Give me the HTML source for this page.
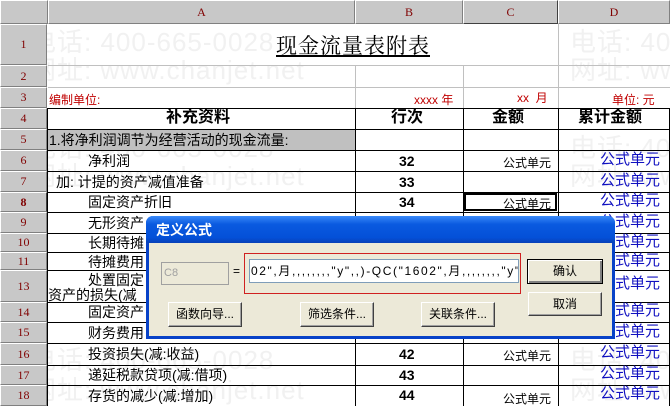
<!DOCTYPE html>
<html><head><meta charset="utf-8"><style>
*{margin:0;padding:0;box-sizing:border-box}
body{width:670px;height:406px;overflow:hidden;background:#fff;position:relative;font-family:"Liberation Sans","Noto Sans CJK SC","WenQuanYi Zen Hei",sans-serif;font-size:13px;color:#000}
.a{position:absolute;white-space:nowrap}
.rh{position:absolute;left:0;width:47px;background:#c8c8c8;border:1px solid #fff;border-right-color:#808080;border-bottom-color:#808080;color:#800000;font-size:12px;text-align:center;font-family:"Liberation Serif",serif}
.ch{position:absolute;top:0;height:24px;background:#c8c8c8;border:1px solid #fff;border-right-color:#808080;border-bottom-color:#808080;color:#800000;font-size:12px;text-align:center;line-height:22px;font-family:"Liberation Serif",serif}
.hl{position:absolute;left:47px;width:623px;height:1px;background:#000}
.gl{position:absolute;height:1px;background:#c0c0c0}
.vl{position:absolute;width:1px;background:#000}
.wm{position:absolute;color:#f1f1f1;font-size:26px;white-space:nowrap;letter-spacing:1px}
.t{position:absolute;font-size:14px;white-space:nowrap;line-height:20px}
.blue{color:#1010c0;font-size:15px}
.btn{position:absolute;background:#ece9d8;border:1px solid #fff;border-right-color:#404040;border-bottom-color:#404040;box-shadow:inset -1px -1px 0 #a0a0a0;font-size:12px;text-align:center;line-height:22px}
</style></head><body>
<div class="wm" style="left:30px;top:22px">电话: 400-665-0028</div>
<div class="wm" style="left:30px;top:50px">网址: www.chanjet.net</div>
<div class="wm" style="left:570px;top:22px">电话: 400</div>
<div class="wm" style="left:570px;top:50px">网址: www</div>
<div class="wm" style="left:30px;top:128px">电话: 400-665-0028</div>
<div class="wm" style="left:30px;top:156px">网址: www.chanjet.net</div>
<div class="wm" style="left:570px;top:128px">电话: 400</div>
<div class="wm" style="left:570px;top:156px">网址: www</div>
<div class="wm" style="left:30px;top:340px">电话: 400-665-0028</div>
<div class="wm" style="left:30px;top:370px">网址: www.chanjet.net</div>
<div class="wm" style="left:570px;top:340px">电话: 400</div>
<div class="wm" style="left:570px;top:370px">网址: www</div>

<div class="ch" style="left:0;width:48px"></div>
<div class="ch" style="left:48px;width:307px">A</div>
<div class="ch" style="left:355px;width:108px">B</div>
<div class="ch" style="left:463px;width:95px;border-color:#fff #404040 #404040 #fff">C</div>
<div class="ch" style="left:558px;width:112px">D</div>

<div class="rh" style="top:24px;height:41px;line-height:39px">1</div>
<div class="rh" style="top:65px;height:22px;line-height:20px">2</div>
<div class="rh" style="top:87px;height:21px;line-height:19px">3</div>
<div class="rh" style="top:108px;height:21px;line-height:19px">4</div>
<div class="rh" style="top:129px;height:21px;line-height:19px">5</div>
<div class="rh" style="top:150px;height:21px;line-height:19px">6</div>
<div class="rh" style="top:171px;height:21px;line-height:19px">7</div>
<div class="rh" style="top:192px;height:20px;line-height:18px;font-weight:bold;border-right-color:#404040">8</div>
<div class="rh" style="top:212px;height:21px;line-height:19px">9</div>
<div class="rh" style="top:233px;height:19px;line-height:17px">10</div>
<div class="rh" style="top:252px;height:18px;line-height:16px">11</div>
<div class="rh" style="top:270px;height:32px;line-height:30px">13</div>
<div class="rh" style="top:302px;height:20px;line-height:18px">14</div>
<div class="rh" style="top:322px;height:21px;line-height:19px">15</div>
<div class="rh" style="top:343px;height:22px;line-height:20px">16</div>
<div class="rh" style="top:365px;height:20px;line-height:18px">17</div>
<div class="rh" style="top:385px;height:21px;line-height:19px">18</div>

<div class="gl" style="left:48px;width:622px;top:65px"></div>
<div class="gl" style="left:48px;width:622px;top:87px"></div>
<div class="gl" style="left:355px;width:1px;height:63px;top:65px;background:#c0c0c0"></div>
<div class="gl" style="left:463px;width:1px;height:63px;top:65px;background:#c0c0c0"></div>
<div class="gl" style="left:558px;width:1px;height:63px;top:65px;background:#c0c0c0"></div>
<div class="gl" style="left:558px;width:1px;height:41px;top:24px;background:#c0c0c0"></div>
<div class="hl" style="top:108px"></div>
<div class="hl" style="top:129px"></div>
<div class="hl" style="top:150px"></div>
<div class="hl" style="top:171px"></div>
<div class="hl" style="top:192px"></div>
<div class="hl" style="top:212px"></div>
<div class="hl" style="top:233px"></div>
<div class="hl" style="top:252px"></div>
<div class="hl" style="top:270px"></div>
<div class="hl" style="top:302px"></div>
<div class="hl" style="top:322px"></div>
<div class="hl" style="top:343px"></div>
<div class="hl" style="top:365px"></div>
<div class="hl" style="top:385px"></div>
<div class="vl" style="left:47px;top:108px;height:298px"></div>
<div class="vl" style="left:355px;top:108px;height:298px"></div>
<div class="vl" style="left:463px;top:108px;height:298px"></div>
<div class="vl" style="left:558px;top:108px;height:298px"></div>
<div class="vl" style="left:669px;top:108px;height:298px"></div>
<div class="a" style="left:48px;top:130px;width:307px;height:20px;background:#c0c0c0"></div>
<div class="a" style="left:464px;top:193px;width:93px;height:18px;border:2px solid #000;outline:1px solid #fff;outline-offset:-4px"></div>

<div class="t" style="left:276px;top:34px;font-size:21px;line-height:24px;text-decoration:underline;letter-spacing:1px;font-family:'Liberation Serif','Noto Serif CJK SC',serif">现金流量表附表</div>
<div class="t" style="left:49px;top:90px;color:#c00000;font-size:12px">编制单位:</div>
<div class="t" style="left:414px;top:90px;color:#c00000;font-size:12px">xxxx 年</div>
<div class="t" style="left:517px;top:88px;color:#c00000;font-size:12px">xx &nbsp;月</div>
<div class="t" style="left:612px;top:90px;color:#c00000;font-size:12px">单位: 元</div>
<div class="t" style="left:166px;top:108px;font-size:16px;font-weight:bold">补充资料</div>
<div class="t" style="left:391px;top:108px;font-size:16px;font-weight:bold">行次</div>
<div class="t" style="left:492px;top:108px;font-size:16px;font-weight:bold">金额</div>
<div class="t" style="left:578px;top:108px;font-size:16px;font-weight:bold">累计金额</div>
<div class="t" style="left:49px;top:130px">1.将净利润调节为经营活动的现金流量:</div>
<div class="t" style="left:88px;top:151px">净利润</div>
<div class="t" style="left:56px;top:172px">加: 计提的资产减值准备</div>
<div class="t" style="left:88px;top:192px">固定资产折旧</div>
<div class="t" style="left:88px;top:213px">无形资产</div>
<div class="t" style="left:88px;top:233px">长期待摊</div>
<div class="t" style="left:88px;top:252px">待摊费用</div>
<div class="t" style="left:88px;top:270px">处置固定</div>
<div class="t" style="left:48px;top:285px">资产的损失(减</div>
<div class="t" style="left:88px;top:302px">固定资产</div>
<div class="t" style="left:88px;top:323px">财务费用</div>
<div class="t" style="left:88px;top:344px">投资损失(减:收益)</div>
<div class="t" style="left:88px;top:365px">递延税款贷项(减:借项)</div>
<div class="t" style="left:88px;top:386px">存货的减少(减:增加)</div>
<div class="t" style="left:399px;top:151px;font-weight:bold">32</div>
<div class="t" style="left:399px;top:172px;font-weight:bold">33</div>
<div class="t" style="left:399px;top:192px;font-weight:bold">34</div>
<div class="t" style="left:399px;top:344px;font-weight:bold">42</div>
<div class="t" style="left:399px;top:365px;font-weight:bold">43</div>
<div class="t" style="left:399px;top:385px;font-weight:bold">44</div>
<div class="t" style="left:503px;top:153px;font-size:12px">公式单元</div>
<div class="t" style="left:503px;top:194px;font-size:12px">公式单元</div>
<div class="t" style="left:503px;top:346px;font-size:12px">公式单元</div>
<div class="t" style="left:503px;top:389px;font-size:12px">公式单元</div>
<div class="t blue" style="left:600px;top:150px">公式单元</div>
<div class="t blue" style="left:600px;top:171px">公式单元</div>
<div class="t blue" style="left:600px;top:191px">公式单元</div>
<div class="t blue" style="left:600px;top:212px">公式单元</div>
<div class="t blue" style="left:600px;top:232px">公式单元</div>
<div class="t blue" style="left:600px;top:251px">公式单元</div>
<div class="t blue" style="left:600px;top:274px">公式单元</div>
<div class="t blue" style="left:600px;top:301px">公式单元</div>
<div class="t blue" style="left:600px;top:322px">公式单元</div>
<div class="t blue" style="left:600px;top:343px">公式单元</div>
<div class="t blue" style="left:600px;top:364px">公式单元</div>
<div class="t blue" style="left:600px;top:384px">公式单元</div>

<div class="a" style="left:146px;top:216px;width:469px;height:123px;background:#ece9d8;border:3px solid #0842c8;border-top:0;border-radius:7px 7px 0 0">
 <div class="a" style="left:-3px;top:0;width:469px;height:27px;border-radius:7px 7px 0 0;background:linear-gradient(#3a8af8,#0a5ae0 30%,#0450d8 80%,#0840b8)"></div>
 <div class="a" style="left:7px;top:5px;color:#fff;font-weight:bold;font-size:14px;line-height:18px">定义公式</div>
 <div class="a" style="left:12px;top:46px;width:68px;height:23px;background:#ece9d8;border:1px solid #a0a0a0;color:#a0a0a0;font-size:11px;padding-left:2px;line-height:20px">C8</div>
 <div class="a" style="left:84px;top:48px;font-size:12px">=</div>
 <div class="a" style="left:95px;top:37px;width:277px;height:41px;border:1px solid #d02020"></div>
 <div class="a" style="left:100px;top:43px;width:270px;height:24px;background:#fff;border:1px solid #7f9db9;font-size:12px;line-height:22px;padding-left:1px;overflow:hidden;letter-spacing:1.6px">02",月,,,,,,,,"y",,)-QC("1602",月,,,,,,,,"y",,)</div>
 <div class="btn" style="left:378px;top:43px;width:76px;height:25px;border:1px solid #000;box-shadow:inset 1px 1px 0 #fff,inset -2px -2px 0 #808080">确认</div>
 <div class="btn" style="left:379px;top:76px;width:74px;height:24px">取消</div>
 <div class="btn" style="left:19px;top:86px;width:74px;height:25px">函数向导...</div>
 <div class="btn" style="left:151px;top:86px;width:74px;height:25px">筛选条件...</div>
 <div class="btn" style="left:272px;top:86px;width:74px;height:25px">关联条件...</div>
</div>
</body></html>
